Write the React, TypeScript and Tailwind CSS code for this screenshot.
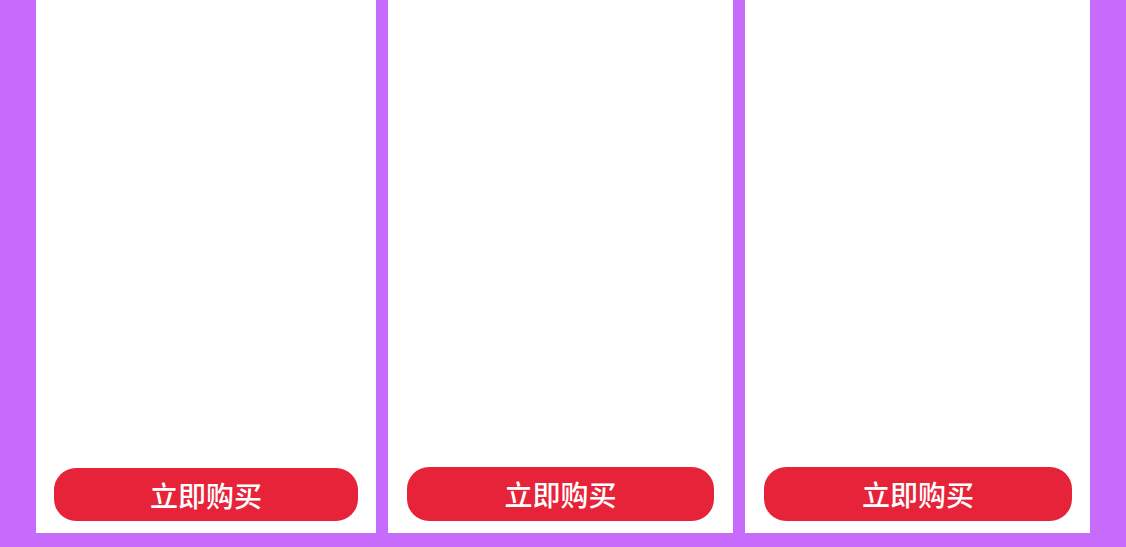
import React from 'react';

const BuyButton: React.FC<{ tall?: boolean }> = ({ tall = true }) => (
  <button
    className={`${tall ? 'h-[54px]' : 'h-[53px]'} rounded-[22px] bg-[#e62338] text-white text-[28px] font-medium flex items-center justify-center`}
    style={{ fontFamily: '"Noto Sans CJK SC", "Noto Sans", sans-serif' }}
  >
    立即购买
  </button>
);

const App: React.FC = () => {
  return (
    <div className="w-[1126px] h-[547px] bg-[#c76bfc] flex gap-[12px] px-[36px] pb-[14px] overflow-hidden">
      <div className="w-[340px] h-[533px] bg-white flex flex-col justify-end px-[18px] pb-[12px]">
        <BuyButton tall={false} />
      </div>
      <div className="w-[345px] h-[533px] bg-white flex flex-col justify-end px-[19px] pb-[12px]">
        <BuyButton />
      </div>
      <div className="w-[345px] h-[533px] bg-white flex flex-col justify-end pl-[19px] pr-[18px] pb-[12px]">
        <BuyButton />
      </div>
    </div>
  );
};

export default App;
